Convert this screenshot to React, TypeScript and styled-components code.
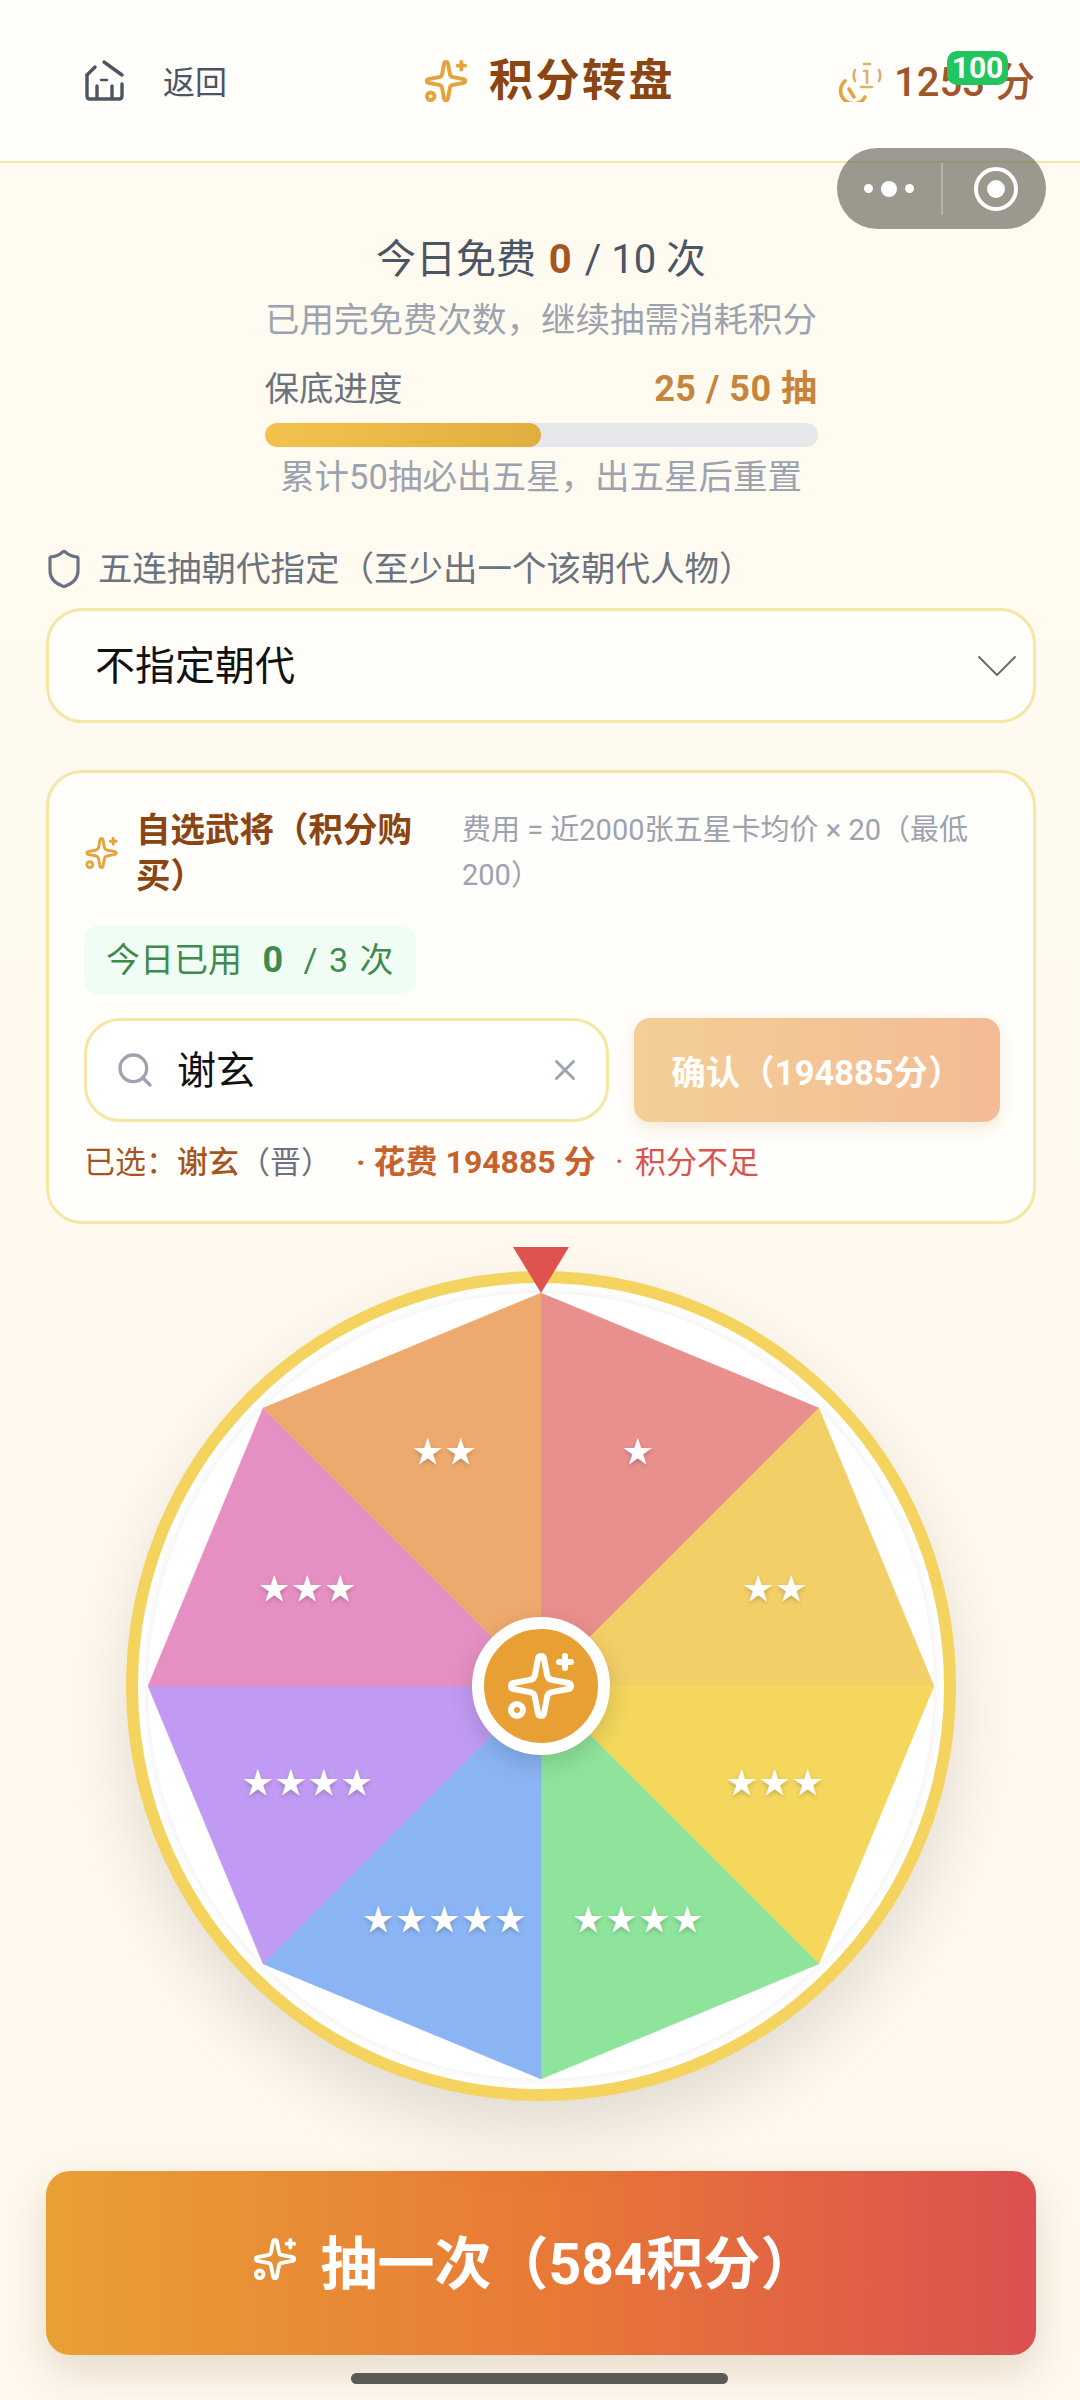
import { FC } from 'react'
import styled, { createGlobalStyle } from 'styled-components'
import { ChevronDown, Search, Shield, Sparkles, X } from 'lucide-react'

const GlobalStyle = createGlobalStyle`
  html, body {
    margin: 0;
    padding: 0;
  }
  body {
    font-family: Roboto, "Noto Sans CJK SC", "Noto Sans", sans-serif;
  }
`

const segments = [
  { stars: 1, color: '#e98f8e' },
  { stars: 2, color: '#f3cf67' },
  { stars: 3, color: '#f4d75c' },
  { stars: 4, color: '#8ee49b' },
  { stars: 5, color: '#8ab4f3' },
  { stars: 4, color: '#c19bf3' },
  { stars: 3, color: '#e68fc2' },
  { stars: 2, color: '#eeaa6e' },
]

const WHEEL_RADIUS = 393
const LABEL_RADIUS = 253

const polar = (radius: number, degrees: number) => {
  const rad = (degrees * Math.PI) / 180
  return { x: radius * Math.sin(rad), y: -radius * Math.cos(rad) }
}

// the house in the shot has broken strokes, so it is drawn by hand
const BackIcon: FC = () => (
  <svg width={44} height={44} viewBox='24 18 44 44' fill='none' stroke='#4b5563' strokeWidth={3.4} strokeLinecap='round'>
    <path d='M44 21 L62 34' />
    <path d='M27 34 L35 26' />
    <path d='M27 34 V55 Q27 58 30 58 H59 Q62 58 62 55 V43' />
    <path d='M37 45 V57 M52 45 V57' />
    <path d='M41 39 H47' strokeWidth={2.4} />
  </svg>
)

const CoinIcon: FC = () => (
  <svg width={46} height={42} viewBox='14 18 46 42' fill='none' strokeLinecap='round'>
    <g stroke='#e4a33c' strokeWidth={3.6}>
      <path d='M23 39 A13 13 0 1 0 43 55' />
      <path d='M27 47 L32 55' />
    </g>
    <g stroke='#dcb070' strokeWidth={2.6}>
      <path d='M33 28 A13 13 0 0 0 33 39' />
      <path d='M57 28 A13 13 0 0 1 57 39' />
      <path d='M42 22 H48 M39 45 H50' />
      <path d='M42 29 H45 V41' />
    </g>
  </svg>
)

const Wheel: FC = () => (
  <WheelFrame>
    <Pointer />
    <WheelDisc>
      <svg width={786} height={786} viewBox='-393 -393 786 786'>
        {segments.map((segment, i) => {
          const a = polar(WHEEL_RADIUS, i * 45)
          const b = polar(WHEEL_RADIUS, (i + 1) * 45)
          return (
            <polygon
              key={i}
              points={`0,0 ${a.x},${a.y} ${b.x},${b.y}`}
              fill={segment.color}
              stroke={segment.color}
              strokeWidth={0.5}
            />
          )
        })}
      </svg>
      {segments.map((segment, i) => {
        const p = polar(LABEL_RADIUS, i * 45 + 22.5)
        return (
          <StarLabel key={i} style={{ left: 393 + p.x, top: 393 + p.y }}>
            {'★'.repeat(segment.stars)}
          </StarLabel>
        )
      })}
      <Hub>
        <Sparkles size={72} color='#fff' strokeWidth={2} />
      </Hub>
    </WheelDisc>
  </WheelFrame>
)

export default function App() {
  return (
    <>
      <GlobalStyle />
      <Page>
        <Header>
          <BackLink>
            <BackIcon />
            <BackText>返回</BackText>
          </BackLink>
          <HeaderTitle>
            <Sparkles size={46} color='#e4a33c' strokeWidth={2} />
            <TitleText>积分转盘</TitleText>
          </HeaderTitle>
          <Balance>
            <CoinIcon />
            <BalanceText>1253 分</BalanceText>
            <Badge>100</Badge>
          </Balance>
        </Header>

        <Capsule>
          <Dots>
            <Dot $size={9} />
            <Dot $size={16} />
            <Dot $size={9} />
          </Dots>
          <CapsuleDivider />
          <RecordRing>
            <RecordCore />
          </RecordRing>
        </Capsule>

        <Content>
          <FreeLine>
            今日免费 <FreeCount>0</FreeCount> / 10 次
          </FreeLine>
          <SubLine>已用完免费次数，继续抽需消耗积分</SubLine>

          <Progress>
            <ProgressHead>
              <span>保底进度</span>
              <ProgressValue>25 / 50 抽</ProgressValue>
            </ProgressHead>
            <ProgressTrack>
              <ProgressFill style={{ width: `${(25 / 50) * 100}%` }} />
            </ProgressTrack>
            <ProgressNote>累计50抽必出五星，出五星后重置</ProgressNote>
          </Progress>

          <FieldLabel>
            <Shield size={42} color='#6b7280' strokeWidth={1.8} />
            五连抽朝代指定（至少出一个该朝代人物）
          </FieldLabel>
          <SelectBox>
            不指定朝代
            <ChevronDown size={72} color='#666' strokeWidth={0.6} />
          </SelectBox>

          <PickCard>
            <PickHead>
              <Sparkles size={38} color='#e4a33c' strokeWidth={2} />
              <PickTitle>自选武将（积分购买）</PickTitle>
              <PickNote>费用 = 近2000张五星卡均价 × 20（最低200）</PickNote>
            </PickHead>
            <UsageChip>
              今日已用 <b>0</b> / 3 次
            </UsageChip>
            <SearchRow>
              <SearchBox>
                <Search size={40} color='#9ca3af' strokeWidth={2} />
                <SearchValue>谢玄</SearchValue>
                <X size={34} color='#9ca3af' strokeWidth={2} />
              </SearchBox>
              <ConfirmButton>确认（194885分）</ConfirmButton>
            </SearchRow>
            <Selected>
              已选：<b>谢玄</b>
              <Dynasty>（晋）</Dynasty>
              <Cost> · 花费 194885 分</Cost>
              <Short> · 积分不足</Short>
            </Selected>
          </PickCard>

          <WheelArea>
            <Wheel />
          </WheelArea>

          <DrawButton>
            <Sparkles size={46} color='#fff' strokeWidth={2} />
            抽一次（584积分）
          </DrawButton>
        </Content>

        <HomeBar />
      </Page>
    </>
  )
}

const Page = styled.div`
  position: relative;
  width: 1080px;
  height: 2400px;
  overflow: hidden;
  background: linear-gradient(180deg, #fffbf0 0%, #fff8ee 100%);
`

const Header = styled.header`
  display: grid;
  grid-template-columns: 339px auto 1fr;
  align-items: center;
  box-sizing: border-box;
  height: 163px;
  padding: 0 45px 0 84px;
  background: #fffefb;
  border-bottom: 2px solid #f5e6a3;
`

const BackLink = styled.div`
  display: flex;
  align-items: center;
  gap: 35px;
`

const BackText = styled.span`
  font-size: 32px;
  color: #4b5563;
  transform: translateY(-1px);
`

const HeaderTitle = styled.div`
  display: flex;
  align-items: center;
  gap: 20px;
`

const TitleText = styled.h1`
  margin: 0;
  font-size: 44px;
  font-weight: 700;
  line-height: 52px;
  letter-spacing: 2.5px;
  color: #8b4513;
`

const Balance = styled.div`
  position: relative;
  display: flex;
  align-items: center;
  justify-content: flex-end;
  gap: 12px;
`

const BalanceText = styled.span`
  font-size: 40px;
  font-weight: 500;
  color: #a0562a;
  transform: translateY(-2px);
`

const Badge = styled.span`
  position: absolute;
  top: -1px;
  right: 27px;
  width: 61px;
  height: 34px;
  border-radius: 10px;
  background: #22c55e;
  color: #fff;
  font-size: 30px;
  font-weight: 700;
  line-height: 34px;
  text-align: center;
`

const Capsule = styled.div`
  position: absolute;
  top: 148px;
  left: 837px;
  display: flex;
  align-items: center;
  width: 209px;
  height: 81px;
  border-radius: 41px;
  background: rgba(112, 110, 100, 0.7);
`

const Dots = styled.div`
  display: flex;
  align-items: center;
  justify-content: center;
  gap: 8px;
  width: 104px;
`

const Dot = styled.span<{ $size: number }>`
  width: ${p => p.$size}px;
  height: ${p => p.$size}px;
  border-radius: 50%;
  background: #fff;
`

const CapsuleDivider = styled.span`
  width: 2px;
  height: 52px;
  background: rgba(255, 255, 255, 0.25);
`

const RecordRing = styled.span`
  display: flex;
  align-items: center;
  justify-content: center;
  box-sizing: border-box;
  width: 44px;
  height: 44px;
  margin-left: 31px;
  border: 4px solid #fff;
  border-radius: 50%;
`

const RecordCore = styled.span`
  width: 18px;
  height: 18px;
  border-radius: 50%;
  background: #fff;
`

const Content = styled.main`
  display: flex;
  flex-direction: column;
  padding: 75px 44px 0 46px;
`

const FreeLine = styled.div`
  font-size: 40px;
  line-height: 44px;
  color: #4b5563;
  text-align: center;
`

const FreeCount = styled.span`
  margin: 0 3px;
  font-weight: 700;
  color: #a5561f;
`

const SubLine = styled.div`
  margin-top: 16px;
  font-size: 34.5px;
  line-height: 44px;
  color: #9ca3af;
  text-align: center;
`

const Progress = styled.section`
  align-self: center;
  width: 553px;
  margin-top: 25px;
`

const ProgressHead = styled.div`
  display: flex;
  justify-content: space-between;
  font-size: 34.5px;
  line-height: 44px;
  color: #6b7280;
`

const ProgressValue = styled.span`
  font-size: 36px;
  font-weight: 700;
  letter-spacing: 0.5px;
  color: #c8843c;
`

const ProgressTrack = styled.div`
  height: 24px;
  margin-top: 12px;
  border-radius: 12px;
  background: #e5e7eb;
  overflow: hidden;
`

const ProgressFill = styled.div`
  height: 100%;
  border-radius: 12px;
  background: linear-gradient(90deg, #f3c24e, #e0ae3e);
`

const ProgressNote = styled.div`
  margin-top: 10px;
  font-size: 34.5px;
  line-height: 40px;
  color: #9ca3af;
  text-align: center;
  white-space: nowrap;
`

const FieldLabel = styled.div`
  display: flex;
  align-items: center;
  gap: 13px;
  margin-top: 50px;
  margin-left: -3px;
  font-size: 34.5px;
  line-height: 44px;
  color: #6b7280;
`

const SelectBox = styled.div`
  display: flex;
  align-items: center;
  justify-content: space-between;
  box-sizing: border-box;
  height: 115px;
  margin-top: 17px;
  padding: 0 0 5px 46px;
  border: 3px solid #f5e6a3;
  border-radius: 36px;
  background: #fffefa;
  font-size: 40px;
  color: #111;
  overflow: hidden;

  svg {
    margin-top: 6px;
  }
`

const PickCard = styled.section`
  margin-top: 47px;
  padding: 34px 33px 38px 35px;
  border: 3px solid #f5e6a3;
  border-radius: 36px;
  background: #fffefa;
`

const PickHead = styled.div`
  display: flex;
  align-items: center;
`

const PickTitle = styled.div`
  flex: none;
  width: 290px;
  margin-left: 17px;
  font-size: 34.5px;
  font-weight: 700;
  line-height: 46px;
  color: #8b4513;
`

const PickNote = styled.div`
  margin-left: 36px;
  font-size: 29px;
  line-height: 45px;
  color: #9ca3af;
`

const UsageChip = styled.div`
  width: fit-content;
  margin-top: 26px;
  padding: 0 22px;
  border-radius: 16px;
  background: #f0fdf4;
  font-size: 34px;
  line-height: 70px;
  color: #3f8a4d;
  white-space: pre-wrap;
  word-spacing: 3px;

  b {
    margin: 0 9px;
    font-size: 36px;
  }
`

const SearchRow = styled.div`
  display: flex;
  gap: 25px;
  height: 104px;
  margin-top: 23px;
`

const SearchBox = styled.div`
  display: flex;
  align-items: center;
  box-sizing: border-box;
  width: 525px;
  padding: 0 24px 0 28px;
  border: 3px solid #f5e6a3;
  border-radius: 36px;
  background: #fff;
`

const SearchValue = styled.span`
  flex: 1;
  margin-left: 22px;
  font-size: 39px;
  color: #111;
  transform: translateY(-3px);
`

const ConfirmButton = styled.button`
  flex: 1;
  border: 0;
  border-radius: 16px;
  background: linear-gradient(90deg, #e8a035, #e87a35);
  box-shadow: 0 6px 14px rgba(200, 120, 40, 0.3);
  opacity: 0.5;
  font-family: inherit;
  font-size: 34.5px;
  font-weight: 700;
  color: #fff;
  white-space: nowrap;
  padding: 0;
`

const Selected = styled.div`
  margin-top: 20px;
  font-size: 31px;
  line-height: 40px;
  color: #a5561f;
  white-space: pre-wrap;

  b {
    font-weight: 500;
  }
`

const Dynasty = styled.span`
  margin-right: 16px;
  color: #6b7280;
`

const Cost = styled.span`
  font-size: 32px;
  font-weight: 700;
  color: #c8622c;
`

const Short = styled.span`
  margin-left: 8px;
  word-spacing: 4px;
  color: #d9534f;
`

const WheelArea = styled.section`
  display: flex;
  justify-content: center;
  margin-top: 47px;
`

const WheelFrame = styled.div`
  position: relative;
  box-sizing: border-box;
  display: flex;
  align-items: center;
  justify-content: center;
  width: 830px;
  height: 830px;
  border: 12px solid #f4d35e;
  border-radius: 50%;
  background: #fff;
  box-shadow: 0 30px 70px rgba(0, 0, 0, 0.12);
`

const Pointer = styled.div`
  position: absolute;
  top: -36px;
  left: 50%;
  z-index: 3;
  width: 56px;
  height: 46px;
  margin-left: -28px;
  background: #e0524f;
  clip-path: polygon(0 0, 100% 0, 50% 100%);
`

const WheelDisc = styled.div`
  position: relative;
  width: 786px;
  height: 786px;
  border-radius: 50%;
  box-shadow: 0 0 10px rgba(60, 60, 90, 0.1);

  svg {
    display: block;
  }
`

const StarLabel = styled.span`
  position: absolute;
  transform: translate(-50%, calc(-50% - 3px));
  padding-left: 3px;
  font-family: "Noto Sans CJK SC", sans-serif;
  font-size: 30px;
  line-height: 1;
  letter-spacing: 3px;
  color: #fff;
  white-space: nowrap;
  text-shadow: 0 2px 4px rgba(0, 0, 0, 0.2);
`

const Hub = styled.div`
  position: absolute;
  top: 50%;
  left: 50%;
  display: flex;
  align-items: center;
  justify-content: center;
  box-sizing: border-box;
  width: 138px;
  height: 138px;
  margin: -69px 0 0 -69px;
  border: 12px solid #fff;
  border-radius: 50%;
  background: #e8a035;
  box-shadow: 0 8px 24px rgba(0, 0, 0, 0.15);
`

const DrawButton = styled.button`
  display: flex;
  align-items: center;
  justify-content: center;
  gap: 22px;
  height: 184px;
  margin-top: 70px;
  padding: 0 12px 8px 0;
  border: 0;
  border-radius: 24px;
  background: linear-gradient(90deg, #e8a035 0%, #e87a35 50%, #dc5050 100%);
  box-shadow: 0 16px 40px rgba(120, 100, 60, 0.2);
  font-family: inherit;
  font-size: 57px;
  font-weight: 700;
  color: #fff;
`

const HomeBar = styled.div`
  position: absolute;
  left: 351px;
  bottom: 16px;
  width: 377px;
  height: 11px;
  border-radius: 6px;
  background: #5c5a55;
`
